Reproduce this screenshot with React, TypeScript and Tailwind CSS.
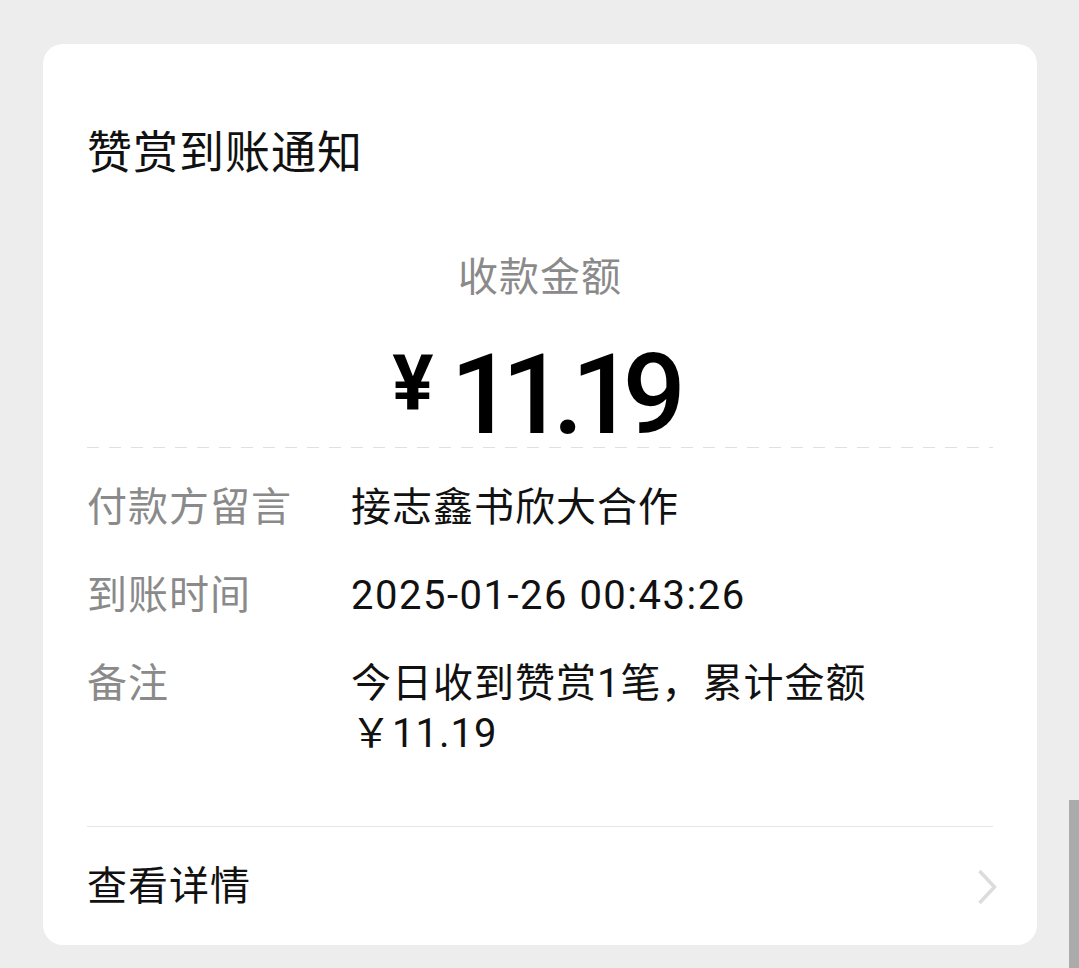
import React from "react";

const FONT = "font-['Roboto','Noto_Sans_CJK_SC',sans-serif]";

function Row({ label, children }: { label: string; children: React.ReactNode }) {
  return (
    <div className="flex items-start">
      <div className="w-[264px] shrink-0 text-[40px] leading-[50px] tracking-[1px] text-[#8a8a8a]">{label}</div>
      <div className="flex-1 text-[40px] leading-[50px] tracking-[1px] text-[#111111]">{children}</div>
    </div>
  );
}

export default function App() {
  return (
    <div className={`relative h-[968px] w-full overflow-hidden bg-[#ededed] ${FONT}`}>
      <div className="ml-[43px] mt-[44px] w-[994px] rounded-[20px] bg-white px-[44px] pt-[83px] pb-[33px]">
        <div className="text-[45px] leading-[54px] tracking-[1px] text-[#111111]">赞赏到账通知</div>
        <div className="mt-[72px] text-center text-[40px] leading-[50px] tracking-[1px] text-[#8a8a8a]">收款金额</div>
        <div className="mt-[42px] flex items-start justify-center text-black">
          <span className="mt-[1px] text-[77px] font-bold leading-none">¥</span>
          <span className="ml-[17px] mr-[14px] text-[111px] font-medium leading-[100px] tracking-[-12px]">11.19</span>
        </div>
        <div className="mt-[2px] h-px w-full bg-[linear-gradient(to_right,#e0e0e0_12px,transparent_12px)] bg-[length:22px_1px]" />
        <div className="mt-[35px] flex flex-col gap-[38px]">
          <Row label="付款方留言">接志鑫书欣大合作</Row>
          <Row label="到账时间">
            <span className="tracking-[1.5px]">2025-01-26 00:43:26</span>
          </Row>
          <Row label="备注">
            今日收到赞赏1笔，累计金额
            <br />
            ￥11.19
          </Row>
        </div>
        <div className="mt-[67px] h-px w-full bg-[#e6e6e6]" />
        <div className="mt-[35px] flex items-center justify-between">
          <span className="text-[40px] leading-[50px] tracking-[1px] text-[#111111]">查看详情</span>
          <svg width="20" height="36" viewBox="0 0 20 36" className="-mr-[4px]" fill="none">
            <path d="M2.5 2 L17.5 18 L2.5 34" stroke="#dcdcdc" strokeWidth="3.5" strokeLinecap="butt" strokeLinejoin="miter" />
          </svg>
        </div>
      </div>
      <div className="absolute right-0 top-[800px] h-[168px] w-[10px] bg-[#ababab]" />
    </div>
  );
}
